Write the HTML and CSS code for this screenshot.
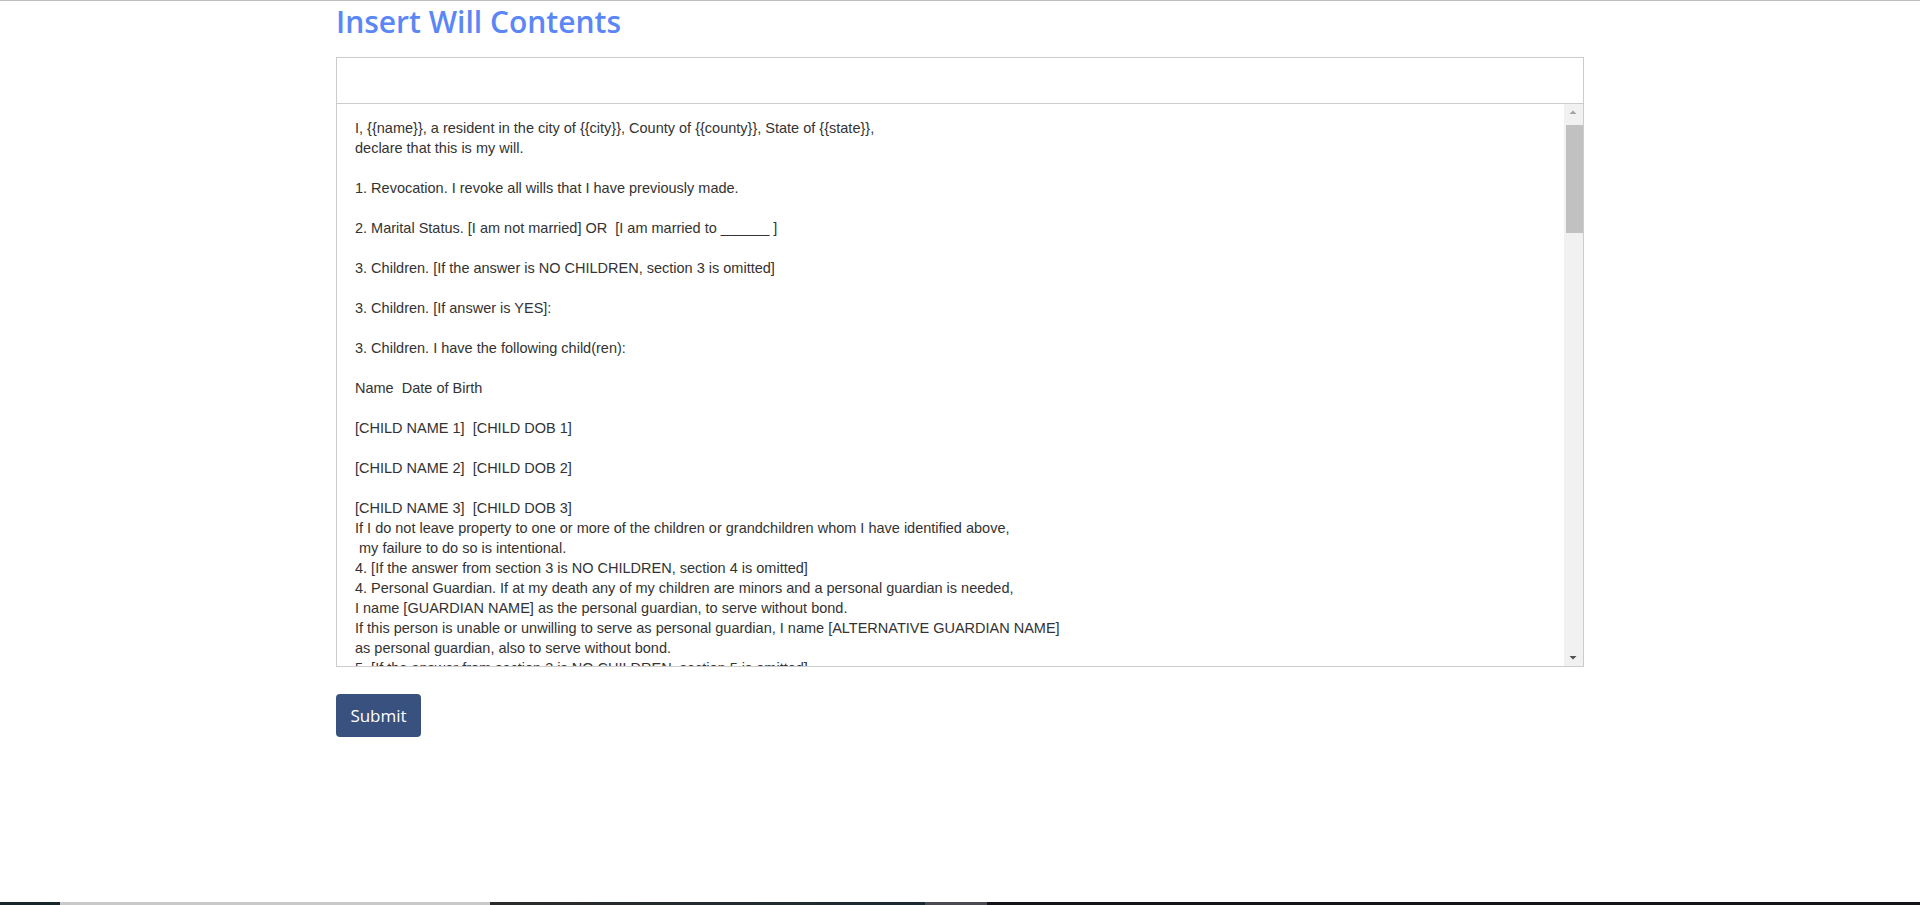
FILE: index.html
```html
<!DOCTYPE html>
<html lang="en">
<head>
<meta charset="utf-8">
<title>Insert Will Contents</title>
<link rel="stylesheet" href="styles.css">
</head>
<body>
<div class="topline"></div>
<main class="container">
  <h1 class="title">Insert Will Contents</h1>
  <div class="editor">
    <div class="toolbar"></div>
    <div class="content">
      <div class="doc">I, {{name}}, a resident in the city of {{city}}, County of {{county}}, State of {{state}},
declare that this is my will.

1. Revocation. I revoke all wills that I have previously made.

2. Marital Status. [I am not married] OR  [I am married to ______ ]

3. Children. [If the answer is NO CHILDREN, section 3 is omitted]

3. Children. [If answer is YES]:

3. Children. I have the following child(ren):

Name  Date of Birth

[CHILD NAME 1]  [CHILD DOB 1]

[CHILD NAME 2]  [CHILD DOB 2]

[CHILD NAME 3]  [CHILD DOB 3]
If I do not leave property to one or more of the children or grandchildren whom I have identified above,
 my failure to do so is intentional.
4. [If the answer from section 3 is NO CHILDREN, section 4 is omitted]
4. Personal Guardian. If at my death any of my children are minors and a personal guardian is needed,
I name [GUARDIAN NAME] as the personal guardian, to serve without bond.
If this person is unable or unwilling to serve as personal guardian, I name [ALTERNATIVE GUARDIAN NAME]
as personal guardian, also to serve without bond.
5. [If the answer from section 3 is NO CHILDREN, section 5 is omitted]</div>
      <div class="scrollbar" aria-hidden="true">
        <div class="sb-btn">
          <svg width="17" height="17" viewBox="0 0 17 17"><polygon points="4.5,10 11.5,10 8,6.5" fill="#a3a3a3"/></svg>
        </div>
        <div class="sb-track"><div class="sb-thumb"></div></div>
        <div class="sb-btn">
          <svg width="17" height="17" viewBox="0 0 17 17"><polygon points="4.5,7 11.5,7 8,10.5" fill="#505050"/></svg>
        </div>
      </div>
    </div>
  </div>
  <button class="submit" type="button">Submit</button>
</main>
<div class="taskbar">
  <span class="seg s1"></span><span class="seg s2"></span><span class="seg s3"></span><span class="seg s4"></span><span class="seg s5"></span>
</div>
</body>
</html>
```

FILE: styles.css
```css
html, body {
  margin: 0;
  padding: 0;
  height: 100%;
}

body {
  background: #ffffff;
  display: flex;
  flex-direction: column;
  font-family: "Open Sans", "Noto Sans", sans-serif;
}

.topline {
  height: 1px;
  background: #bdbdbd;
  flex: none;
}

.container {
  width: 1248px;
  margin: 0 auto;
  flex: 1;
}

.title {
  margin: 0;
  height: 56px;
  box-sizing: border-box;
  padding-top: 1px;
  font-family: "Open Sans", "Noto Sans", sans-serif;
  font-weight: 600;
  font-size: 30px;
  line-height: 40px;
  color: #5b87f6;
}

.editor {
  border: 1px solid #cccccc;
}

.toolbar {
  height: 45px;
  border-bottom: 1px solid #cccccc;
}

.content {
  height: 562px;
  display: flex;
}

.doc {
  flex: 1;
  overflow: hidden;
  padding: 14px 18px 0;
  font-family: "Liberation Sans", Arial, sans-serif;
  font-size: 14.5px;
  line-height: 20px;
  color: #333333;
  white-space: pre-wrap;
}

.scrollbar {
  width: 19px;
  flex: none;
  background: #f1f1f1;
  display: flex;
  flex-direction: column;
}

.sb-btn {
  height: 17px;
  flex: none;
  display: flex;
  justify-content: center;
  align-items: center;
}

.sb-btn svg {
  display: block;
}

.sb-track {
  flex: 1;
  padding: 4px 0 0 2px;
}

.sb-thumb {
  width: 17px;
  height: 108px;
  background: #c1c1c1;
}

.submit {
  display: block;
  margin-top: 27px;
  width: 85px;
  height: 43px;
  padding: 0;
  border: none;
  border-radius: 4px;
  background: #39517f;
  color: #ffffff;
  font-family: "Open Sans", "Noto Sans", sans-serif;
  font-size: 17px;
  line-height: 43px;
  cursor: pointer;
}

.taskbar {
  flex: none;
  height: 3px;
  display: flex;
}

.seg {
  height: 100%;
}

.s1 { width: 60px; background: #17262b; }
.s2 { width: 430px; background: #c9c9c9; }
.s3 { width: 435px; background: linear-gradient(90deg, #2c2b2b, #1b2a31); }
.s4 { width: 62px; background: #4a4a50; }
.s5 { flex: 1; background: #141418; }
```
